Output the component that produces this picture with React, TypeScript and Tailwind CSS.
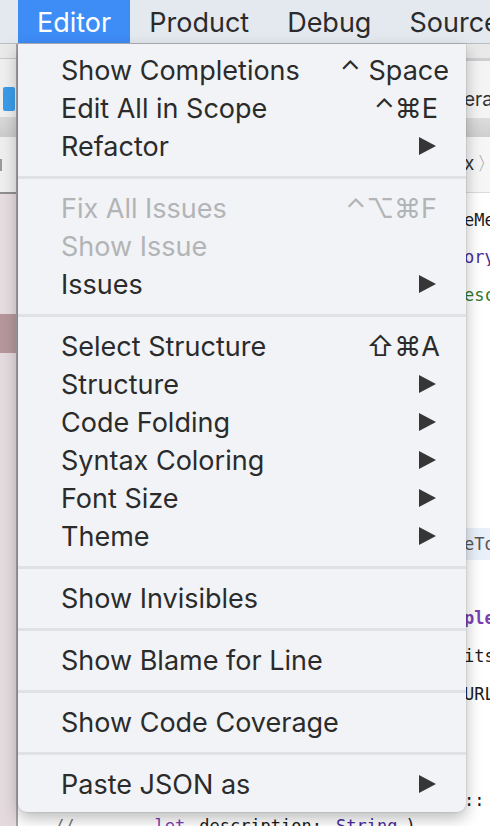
import React from "react";

type Item =
  | { kind: "sep" }
  | {
      kind: "item";
      label: string;
      sc?: string;
      pr?: string;
      arrow?: boolean;
      disabled?: boolean;
    };

const items: Item[] = [
  { kind: "item", label: "Show Completions", sc: "⌃ Space", pr: "pr-[17px]" },
  { kind: "item", label: "Edit All in Scope", sc: "⌃⌘E", pr: "pr-[28px]" },
  { kind: "item", label: "Refactor", arrow: true },
  { kind: "sep" },
  { kind: "item", label: "Fix All Issues", sc: "⌃⌥⌘F", pr: "pr-[29px]", disabled: true },
  { kind: "item", label: "Show Issue", disabled: true },
  { kind: "item", label: "Issues", arrow: true },
  { kind: "sep" },
  { kind: "item", label: "Select Structure", sc: "⇧⌘A", pr: "pr-[26px]" },
  { kind: "item", label: "Structure", arrow: true },
  { kind: "item", label: "Code Folding", arrow: true },
  { kind: "item", label: "Syntax Coloring", arrow: true },
  { kind: "item", label: "Font Size", arrow: true },
  { kind: "item", label: "Theme", arrow: true },
  { kind: "sep" },
  { kind: "item", label: "Show Invisibles" },
  { kind: "sep" },
  { kind: "item", label: "Show Blame for Line" },
  { kind: "sep" },
  { kind: "item", label: "Show Code Coverage" },
  { kind: "sep" },
  { kind: "item", label: "Paste JSON as", arrow: true },
];

function Arrow() {
  return (
    <svg width="17" height="18" viewBox="0 0 17 18" className="block">
      <polygon points="0,0 17,9 0,18" fill="#363636" />
    </svg>
  );
}

function Menu() {
  return (
    <div className="absolute left-[18px] top-[44px] w-[448px] rounded-b-[9px] bg-[#f1f3f6] pt-[7px] pb-[9px] shadow-[0_6px_16px_rgba(0,0,0,0.28),0_0_0_1px_rgba(0,0,0,0.06)]">
      {items.map((it, i) =>
        it.kind === "sep" ? (
          <div key={i} className="flex h-[24px] items-center">
            <div className="h-[3px] w-full bg-[#dfe1e5]" />
          </div>
        ) : (
          <div
            key={i}
            className={`flex h-[38px] items-center pl-[43px] text-[27px] leading-none ${
              it.disabled ? "text-[#b3b4b6]" : "text-[#2b2b2c]"
            }`}
          >
            <span>{it.label}</span>
            {it.sc && <span className={`ml-auto ${it.pr}`}>{it.sc}</span>}
            {it.arrow && (
              <span className="ml-auto pr-[30px]">
                <Arrow />
              </span>
            )}
          </div>
        )
      )}
    </div>
  );
}

function MenuBar() {
  return (
    <div className="flex h-[44px] items-stretch overflow-hidden whitespace-nowrap border-b border-[#b9bdc4] bg-[#e4e9f0] pl-[18px] text-[27px] text-[#2b2b2c]">
      <div className="flex items-center bg-[#3e8cf6] px-[19px] pt-[3px] text-white">Editor</div>
      <div className="flex items-center px-[19px] pt-[3px]">Product</div>
      <div className="flex items-center px-[19px] pt-[3px]">Debug</div>
      <div className="flex items-center px-[19px] pt-[3px]">Source</div>
    </div>
  );
}

function LeftPane() {
  return (
    <div className="flex w-[18px] shrink-0 flex-col border-r-2 border-[#a8a2a4]">
      <div className="h-[14px] bg-[#e9e9ea]" />
      <div className="h-[1px] bg-[#c9c9cb]" />
      <div className="flex h-[58px] items-end bg-[#efefef] pb-[6px]">
        <div className="ml-[3px] h-[24px] w-[12px] rounded-[2px] bg-[#3b9be8]" />
      </div>
      <div className="h-[20px] bg-gradient-to-b from-[#d9d9d9] to-[#cbcbcb]" />
      <div className="flex h-[55px] items-center bg-[#eeeeee]">
        <div className="h-[12px] w-[2px] bg-[#9a9a9a]" />
      </div>
      <div className="h-[2px] bg-[#8e8e90]" />
      <div className="h-[120px] bg-[#e6dcdf]" />
      <div className="h-[39px] bg-[#b5979b]" />
      <div className="flex-1 bg-[#e4dadd]" />
    </div>
  );
}

const mono = "font-['DejaVu_Sans_Mono',monospace] text-[17px] leading-none";

function CodeRow({ h, text, color, bg }: { h: string; text: string; color: string; bg?: string }) {
  return (
    <div className={`flex ${h} items-center justify-end overflow-hidden whitespace-nowrap ${mono} ${color} ${bg ?? ""}`}>
      <span className="w-[26px] shrink-0 overflow-hidden">{text}</span>
    </div>
  );
}

function Editor() {
  return (
    <div className="flex min-w-0 flex-1 flex-col overflow-hidden bg-white">
      <div className="h-[14px] bg-[#e9e9ea]" />
      <div className="h-[3px] bg-[#cfcfd1]" />
      <div className="flex h-[57px] items-end justify-end overflow-hidden whitespace-nowrap bg-[#f4f4f4] pb-[4px] font-['Inter',sans-serif] text-[19px] text-[#333]">
        <span className="w-[26px] shrink-0 overflow-hidden">era</span>
      </div>
      <div className="h-[19px] bg-gradient-to-b from-[#dcdcdc] to-[#cfcfcf]" />
      <div className="flex h-[55px] items-center justify-end overflow-hidden whitespace-nowrap bg-[#f6f6f6] font-['Inter',sans-serif] text-[19px] text-[#333]">
        <span className="flex w-[26px] shrink-0 overflow-hidden">
          <span>x</span>
          <span className="ml-[3px] text-[#9a9a9a]">〉</span>
        </span>
      </div>
      <div className="h-[1px] bg-[#dcdcdc]" />
      <div className="h-[8px]" />
      <CodeRow h="h-[38px]" text="eMenu" color="text-[#1b1b1b]" />
      <CodeRow h="h-[37px]" text="ory" color="text-[#4a2c9b]" />
      <CodeRow h="h-[38px]" text="escr" color="text-[#2f7a2c]" />
      <div className="h-[214px]" />
      <CodeRow h="h-[32px]" text="eTo" color="text-[#555]" bg="bg-[#e9f0f9]" />
      <div className="h-[39px]" />
      <CodeRow h="h-[38px]" text="ple" color="text-[#7b3fb2] font-bold" />
      <CodeRow h="h-[38px]" text="its" color="text-[#1b1b1b]" />
      <CodeRow h="h-[38px]" text="URL" color="text-[#1b1b1b]" />
      <div className="h-[68px]" />
      <div className={`flex h-[31px] items-start justify-end pt-[11px] ${mono} text-[#1b1b1b]`}>
        <span className="w-[26px] shrink-0">::</span>
      </div>
      <div className={`flex h-[14px] items-start overflow-hidden whitespace-nowrap pl-[36px] pt-[6px] ${mono} text-[#1b1b1b]`}>
        <span className="text-[#7a7a7a]">//</span>
        <span className="ml-[80px] text-[#7b3fb2]">let</span>
        <span className="ml-[14px]">description:</span>
        <span className="ml-[14px] text-[#4a2c9b]">String</span>
        <span className="ml-[8px]">)</span>
      </div>
    </div>
  );
}

export default function App() {
  return (
    <div className="relative h-[826px] w-[490px] overflow-hidden bg-white font-['Inter','DejaVu_Sans',sans-serif]">
      <MenuBar />
      <div className="flex h-[782px]">
        <LeftPane />
        <Editor />
      </div>
      <Menu />
    </div>
  );
}
